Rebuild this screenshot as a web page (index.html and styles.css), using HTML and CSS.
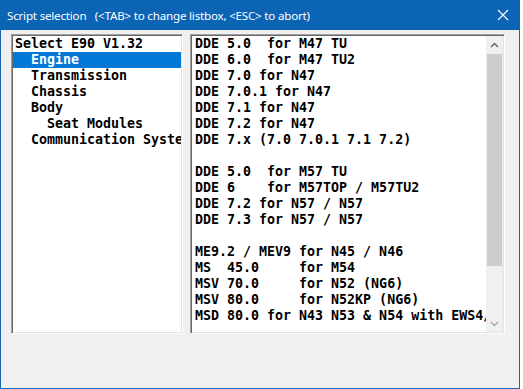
FILE: index.html
```html
<!DOCTYPE html>
<html>
<head>
<meta charset="utf-8">
<link rel="stylesheet" href="styles.css">
</head>
<body>
<div class="screen">
  <div class="window">
    <div class="titlebar">
      <span class="title">Script selection   (&lt;TAB&gt; to change listbox, &lt;ESC&gt; to abort)</span>
      <svg class="close" width="12" height="12" viewBox="0 0 12 12"><path d="M1 1 L11 11 M11 1 L1 11" stroke="#fff" stroke-width="1.1" fill="none"/></svg>
    </div>
    <div class="content">
      <div class="listbox left">
        <div class="items">
          <div class="row">Select E90 V1.32</div>
          <div class="row sel">  Engine</div>
          <div class="row">  Transmission</div>
          <div class="row">  Chassis</div>
          <div class="row">  Body</div>
          <div class="row">    Seat Modules</div>
          <div class="row">  Communication System</div>
        </div>
      </div>
      <div class="listbox right">
        <div class="items">
          <div class="row">DDE 5.0  for M47 TU</div>
          <div class="row">DDE 6.0  for M47 TU2</div>
          <div class="row">DDE 7.0 for N47</div>
          <div class="row">DDE 7.0.1 for N47</div>
          <div class="row">DDE 7.1 for N47</div>
          <div class="row">DDE 7.2 for N47</div>
          <div class="row">DDE 7.x (7.0 7.0.1 7.1 7.2)</div>
          <div class="row"> </div>
          <div class="row">DDE 5.0  for M57 TU</div>
          <div class="row">DDE 6    for M57TOP / M57TU2</div>
          <div class="row">DDE 7.2 for N57 / N57</div>
          <div class="row">DDE 7.3 for N57 / N57</div>
          <div class="row"> </div>
          <div class="row">ME9.2 / MEV9 for N45 / N46</div>
          <div class="row">MS  45.0     for M54</div>
          <div class="row">MSV 70.0     for N52 (NG6)</div>
          <div class="row">MSV 80.0     for N52KP (NG6)</div>
          <div class="row">MSD 80.0 for N43 N53 &amp; N54 with EWS4/EWS3</div>
        </div>
        <div class="scrollbar">
          <div class="arrow up"><svg width="9" height="6" viewBox="0 0 9 6"><path d="M1 5 L4.5 1.5 L8 5" stroke="#606060" stroke-width="1.3" fill="none"/></svg></div>
          <div class="track"><div class="thumb"></div></div>
          <div class="arrow down"><svg width="9" height="6" viewBox="0 0 9 6"><path d="M1 1 L4.5 4.5 L8 1" stroke="#a6a6a6" stroke-width="1.3" fill="none"/></svg></div>
        </div>
      </div>
    </div>
  </div>
  <div class="desk"></div>
</div>
</body>
</html>
```
FILE: styles.css
```css
html, body {
  margin: 0;
  padding: 0;
  background: #ffffff;
}
.screen {
  width: 523px;
  height: 389px;
  display: flex;
  overflow: hidden;
}
.window {
  width: 520px;
  height: 389px;
  box-sizing: border-box;
  border: 1px solid #1a66b3;
  border-top: none;
  background: #f0f0f0;
  display: flex;
  flex-direction: column;
  flex: none;
}
.desk {
  flex: 1;
  background: #ffffff;
}
.titlebar {
  height: 30px;
  flex: none;
  background: #0c64b5;
  display: flex;
  align-items: center;
  padding-left: 7px;
  padding-right: 10px;
  margin: 0 -1px;
}
.title {
  flex: 1;
  color: #ffffff;
  font-family: "Noto Sans", "Open Sans", sans-serif;
  font-size: 11.6px;
  letter-spacing: -0.2px;
  white-space: pre;
}
.close {
  flex: none;
  margin-right: 1px;
}
.content {
  display: flex;
  gap: 7px;
  padding: 4px 0 0 10px;
}
.listbox {
  height: 300px;
  box-sizing: border-box;
  background: #ffffff;
  border-style: solid;
  border-width: 1px;
  border-color: #a0a0a0 #ffffff #ffffff #a0a0a0;
  box-shadow: inset 1px 1px 0 #696969, inset -1px -1px 0 #e3e3e3;
  padding: 1px;
  display: flex;
  overflow: hidden;
}
.left {
  width: 172px;
}
.right {
  width: 315px;
}
.items {
  flex: 1;
  min-width: 0;
  overflow: hidden;
  font-family: "DejaVu Sans Mono", "Liberation Mono", monospace;
  font-weight: bold;
  font-size: 13.3px;
  color: #000000;
}
.row {
  height: 16px;
  line-height: 16px;
  white-space: pre;
  padding-left: 2px;
}
.right .row {
  padding-left: 3px;
}
.row.sel {
  background: #0078d7;
  color: #ffffff;
}
.scrollbar {
  width: 17px;
  flex: none;
  background: #f0f0f0;
  display: flex;
  flex-direction: column;
}
.arrow {
  height: 17px;
  display: flex;
  align-items: center;
  justify-content: center;
  flex: none;
}
.track {
  flex: 1;
  padding-top: 1px;
}
.thumb {
  height: 212px;
  margin: 0 1px;
  background: #cdcdcd;
}
```
